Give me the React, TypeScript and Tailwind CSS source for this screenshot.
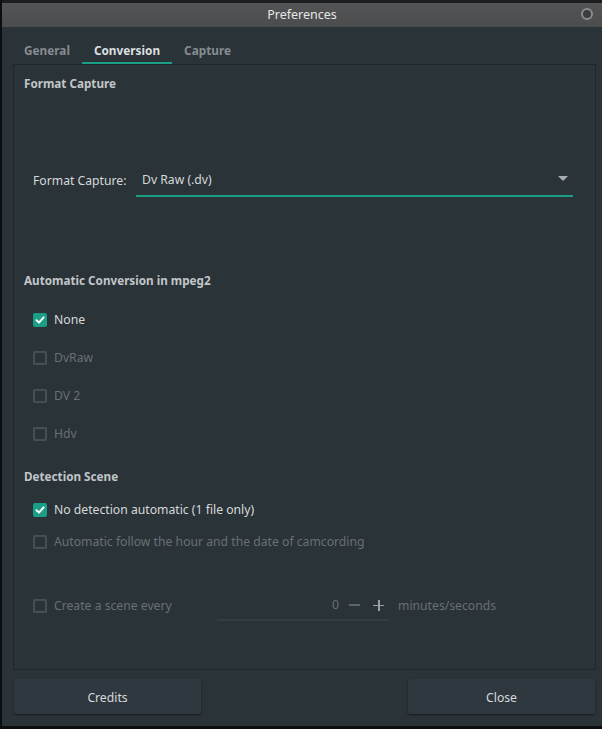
import React from "react";

const font = { fontFamily: '"Noto Sans", "Open Sans", sans-serif' };

function Check({ checked, label, disabled }: { checked?: boolean; label: string; disabled?: boolean }) {
  return (
    <div className="flex items-center h-full">
      {checked ? (
        <div className="w-[14px] h-[14px] rounded-[2px] bg-[#1a9e85] flex items-center justify-center">
          <svg width="10" height="10" viewBox="0 0 10 10">
            <path d="M1.5 5.2 L4 7.6 L8.6 2.4" stroke="white" strokeWidth="2" fill="none" strokeLinecap="round" strokeLinejoin="round" />
          </svg>
        </div>
      ) : (
        <div className="w-[14px] h-[14px] rounded-[2px] border-2 border-[#464f55]" />
      )}
      <span className={`ml-[7px] text-[12.2px] ${disabled ? "text-[#687075]" : "text-[#d6d9db]"}`}>{label}</span>
    </div>
  );
}

export default function App() {
  return (
    <div className="w-[602px] h-[729px] bg-[#2a3338] flex flex-col border-l-2 border-b-[3px] border-[#0c0e0f]" style={font}>
      <div className="h-[27px] shrink-0 bg-gradient-to-b from-[#525455] to-[#4a4c4d] border-t-[3px] border-[#1c1e1f] flex items-center justify-center relative">
        <span className="text-[12.5px] text-[#e6e6e6]">Preferences</span>
        <div className="absolute right-[9px] top-[5px] w-[12px] h-[12px] rounded-full bg-[#3b3d3e] border-2 border-[#8a8c8d]" />
      </div>
      <div className="h-[37px] shrink-0 flex items-end pl-[10px]">
        <div className="h-[25px] px-3 flex items-center pb-[2px] text-[11.8px] font-bold text-[#868c90]">General</div>
        <div className="h-[25px] px-3 flex items-center text-[11.8px] font-bold text-[#dcdfe0] border-b-2 border-[#1a9e85]">Conversion</div>
        <div className="h-[25px] px-3 flex items-center pb-[2px] text-[11.8px] font-bold text-[#868c90]">Capture</div>
      </div>
      <div className="ml-[11px] mr-[6px] h-[606px] shrink-0 border border-[#20272b] flex flex-col pl-[10px]">
        <div className="h-[38px] flex items-center text-[11.7px] font-bold text-[#c2c6c8]">Format Capture</div>
        <div className="mt-[62px] h-[32px] flex items-center">
          <span className="ml-[9px] text-[12.2px] text-[#d6d9db] w-[103px]">Format Capture:</span>
          <div className="w-[437px] h-[32px] border-b-2 border-[#1a9e85] flex items-center justify-between pl-[6px] pr-[5px]">
            <span className="text-[12.2px] text-[#d6d9db]">Dv Raw (.dv)</span>
            <svg width="10" height="6" viewBox="0 0 10 6" className="mb-[2px]">
              <path d="M0 0 L10 0 L5 5 Z" fill="#a9adaf" />
            </svg>
          </div>
        </div>
        <div className="mt-[66px] h-[36px] flex items-center text-[11.7px] font-bold text-[#c2c6c8]">Automatic Conversion in mpeg2</div>
        <div className="mt-[2px] pl-[9px] flex flex-col">
          <div className="h-[38px]"><Check checked label="None" /></div>
          <div className="h-[38px]"><Check label="DvRaw" disabled /></div>
          <div className="h-[38px]"><Check label="DV 2" disabled /></div>
          <div className="h-[38px]"><Check label="Hdv" disabled /></div>
        </div>
        <div className="mt-[6px] h-[35px] flex items-center text-[11.7px] font-bold text-[#c2c6c8]">Detection Scene</div>
        <div className="pl-[9px] flex flex-col">
          <div className="h-[32px]"><Check checked label="No detection automatic (1 file only)" /></div>
          <div className="h-[32px]"><Check label="Automatic follow the hour and the date of camcording" disabled /></div>
        </div>
        <div className="mt-[32px] pl-[9px] h-[32px] flex items-center">
          <div className="w-[184px] h-full"><Check label="Create a scene every" disabled /></div>
          <div className="w-[172px] h-[30px] border-b-2 border-[#343d43] flex items-center justify-end pr-[5px]">
            <span className="text-[12.2px] text-[#687075]">0</span>
            <span className="ml-[10px] w-[11px] h-[1.5px] bg-[#5d6569]" />
            <span className="ml-[13px] relative w-[11px] h-[11px]">
              <span className="absolute left-0 top-[5px] w-[11px] h-[1.5px] bg-[#9aa0a3]" />
              <span className="absolute top-0 left-[5px] w-[1.5px] h-[11px] bg-[#9aa0a3]" />
            </span>
          </div>
          <span className="ml-[9px] text-[12.2px] text-[#687075]">minutes/seconds</span>
        </div>
      </div>
      <div className="mt-[9px] flex justify-between pl-[12px] pr-[7px]">
        <button className="w-[187px] h-[35px] pt-[3px] rounded-[2px] bg-[#2f383e] shadow-[0_1px_2px_rgba(0,0,0,0.5)] text-[12.2px] text-[#d6d9db]">Credits</button>
        <button className="w-[187px] h-[35px] pt-[3px] rounded-[2px] bg-[#2f383e] shadow-[0_1px_2px_rgba(0,0,0,0.5)] text-[12.2px] text-[#d6d9db]">Close</button>
      </div>
    </div>
  );
}
